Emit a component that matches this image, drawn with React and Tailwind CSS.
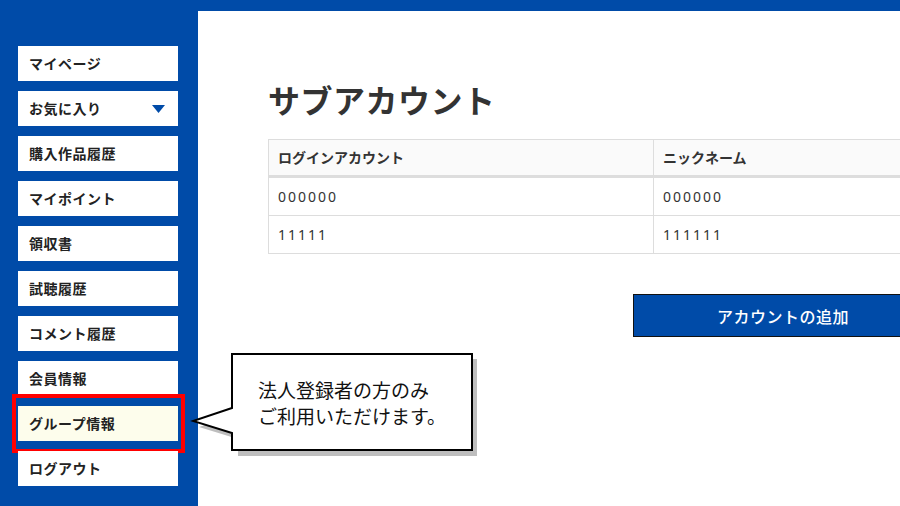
import React from "react";

const items = [
  "マイページ",
  "お気に入り",
  "購入作品履歴",
  "マイポイント",
  "領収書",
  "試聴履歴",
  "コメント履歴",
  "会員情報",
  "グループ情報",
  "ログアウト",
];

const jp = { fontFamily: '"Noto Sans CJK JP", "Noto Sans", sans-serif' };

export default function App() {
  return (
    <div className="relative w-[900px] h-[506px] overflow-hidden bg-[#004ba8]" style={jp}>
      <div className="flex h-full">
        <aside className="w-[198px] shrink-0 flex flex-col gap-[10px] pt-[46px] pl-[18px]">
          {items.map((t, i) => {
            const sel = t === "グループ情報";
            return (
              <div key={t} className="relative w-[160px]">
                {sel && (
                  <div className="absolute -left-[6px] -top-[12px] w-[173px] h-[59px] border-[4px] border-[#ff0000]" />
                )}
                <div
                  className={`relative h-[35px] flex items-center justify-between pl-[11px] pr-[13px] text-[14px] tracking-[0.5px] font-bold text-[#222] ${
                    sel ? "bg-[#fdfdec]" : "bg-white"
                  }`}
                >
                  <span>{t}</span>
                  {i === 1 && (
                    <svg width="13" height="8" viewBox="0 0 13 8">
                      <polygon points="0,0 13,0 6.5,8" fill="#004ba8" />
                    </svg>
                  )}
                </div>
              </div>
            );
          })}
        </aside>
        <main className="flex-1 mt-[11px] bg-white pl-[70px] pt-[68px]">
          <h1 className="text-[32px] leading-[40px] font-bold text-[#333] tracking-[0.5px]">サブアカウント</h1>
          <div className="mt-[20px] w-[700px] border border-[#dddddd] text-[14px] text-[#333]">
            <div className="flex h-[38px] bg-[#fafafa] border-b-[3px] border-[#dddddd] font-bold">
              <div className="w-[385px] flex items-center pl-[9px] border-r border-[#dddddd]">ログインアカウント</div>
              <div className="flex-1 flex items-center pl-[9px]">ニックネーム</div>
            </div>
            <div className="flex h-[38px] border-b border-[#dddddd] tracking-[2px]" style={{ fontFamily: '"Noto Sans", sans-serif' }}>
              <div className="w-[385px] flex items-center pl-[9px] border-r border-[#dddddd]">000000</div>
              <div className="flex-1 flex items-center pl-[9px]">000000</div>
            </div>
            <div className="flex h-[37px] tracking-[2px]" style={{ fontFamily: '"Noto Sans", sans-serif' }}>
              <div className="w-[385px] flex items-center pl-[9px] border-r border-[#dddddd]">11111</div>
              <div className="flex-1 flex items-center pl-[9px]">111111</div>
            </div>
          </div>
          <div className="mt-[40px] ml-[365px] w-[300px] h-[43px] flex items-center justify-center bg-[#004ba8] border border-[#111] text-white text-[16px] tracking-[0.5px] font-medium">
            アカウントの追加
          </div>
        </main>
      </div>

      {/* callout */}
      <div className="absolute left-[190px] top-[351px] w-[290px] h-[105px]">
        <svg width="290" height="105" viewBox="0 0 290 105" className="absolute left-0 top-0">
          <path
            d="M45 5 H284 V102 H45 V85 L6 73 L45 60 Z"
            fill="#888"
            opacity="0.55"
            transform="translate(3,3)"
          />
          <path
            d="M42 3 H282 V99 H42 V82 L3 70 L42 57 Z"
            fill="white"
            stroke="#000"
            strokeWidth="2"
            strokeLinejoin="miter"
          />
        </svg>
        <div className="absolute left-[68px] top-[26px] text-[19px] leading-[26px] text-[#111]">
          <div>法人登録者の方のみ</div>
          <div>ご利用いただけます。</div>
        </div>
      </div>
    </div>
  );
}
